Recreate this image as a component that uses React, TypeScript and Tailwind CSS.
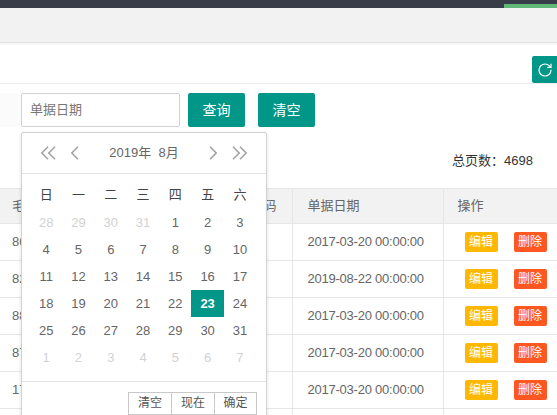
import { RotateCw } from "lucide-react";

const weekdays = ["日", "一", "二", "三", "四", "五", "六"];

const days = [
  [28, 29, 30, 31, 1, 2, 3],
  [4, 5, 6, 7, 8, 9, 10],
  [11, 12, 13, 14, 15, 16, 17],
  [18, 19, 20, 21, 22, 23, 24],
  [25, 26, 27, 28, 29, 30, 31],
  [1, 2, 3, 4, 5, 6, 7],
];

const rows = [
  { id: "86", date: "2017-03-20 00:00:00" },
  { id: "82", date: "2019-08-22 00:00:00" },
  { id: "88", date: "2017-03-20 00:00:00" },
  { id: "87", date: "2017-03-20 00:00:00" },
  { id: "17", date: "2017-03-20 00:00:00" },
];

function DoubleArrow({ flip }: { flip?: boolean }) {
  return (
    <svg width="16" height="14" viewBox="0 0 16 14" fill="none" stroke="#a3a3a3" strokeWidth="1.6" className={flip ? "rotate-180" : ""}>
      <path d="M8 .8 1.8 7 8 13.2M15 .8 8.8 7 15 13.2" />
    </svg>
  );
}

function SingleArrow({ flip }: { flip?: boolean }) {
  return (
    <svg width="9" height="14" viewBox="0 0 9 14" fill="none" stroke="#a3a3a3" strokeWidth="1.6" className={flip ? "rotate-180" : ""}>
      <path d="M8 .8 1.8 7 8 13.2" />
    </svg>
  );
}

function DatePicker() {
  return (
    <div className="absolute left-[21px] top-[132px] w-[246px] rounded-xs border border-[#d2d2d2] bg-white shadow-[0_2px_4px_rgba(0,0,0,0.12)]">
      <div className="flex h-[41px] items-center border-b border-[#e2e2e2] px-[18px]">
        <DoubleArrow />
        <div className="ml-[14px]">
          <SingleArrow />
        </div>
        <div className="flex-1 text-center text-[13px] text-[#666]">2019年&nbsp;&nbsp;8月</div>
        <div className="mr-[14px]">
          <SingleArrow flip />
        </div>
        <DoubleArrow flip />
      </div>
      <div className="px-2 pt-[8px] text-[13px]">
        <div className="grid h-[27px] grid-cols-[repeat(7,32.3px)] items-center text-center text-[#444]">
          {weekdays.map((d) => (
            <div key={d}>{d}</div>
          ))}
        </div>
        {days.map((week, i) => (
          <div key={i} className="grid grid-cols-[repeat(7,32.3px)] text-center">
            {week.map((d, j) => {
              const off = (i === 0 && d > 20) || i === 5;
              const on = d === 23;
              return (
                <div
                  key={j}
                  className={
                    on
                      ? "h-[27px] bg-[#009688] font-bold leading-[27px] text-white"
                      : off
                        ? "h-[27px] leading-[27px] text-[#d2d2d2]"
                        : "h-[27px] leading-[27px] text-[#666]"
                  }
                >
                  {d}
                </div>
              );
            })}
          </div>
        ))}
      </div>
      <div className="mt-[10px] flex justify-end border-t border-[#e2e2e2] pt-[10px] pr-[9px] pb-[10px]">
        <div className="flex h-[23px] text-xs leading-[21px] text-[#555]">
          <div className="w-[44px] border border-[#c9c9c9] text-center">清空</div>
          <div className="ml-[-1px] w-[44px] border border-[#c9c9c9] text-center">现在</div>
          <div className="ml-[-1px] w-[43px] border border-[#c9c9c9] text-center">确定</div>
        </div>
      </div>
    </div>
  );
}

export default function App() {
  return (
    <div className="relative h-[415px] w-[557px] overflow-hidden bg-white font-['Liberation_Sans','Noto_Sans_CJK_SC',sans-serif] text-sm">
      <div className="flex h-2 justify-end bg-[#393d49]">
        <div className="mt-1 h-1 w-[53px] bg-[#5fb878]"></div>
      </div>
      <div className="h-[34px] bg-[#f2f2f2]"></div>
      <div className="h-[3px] border-t border-[#e2e2e2] bg-[#f6f6f6]"></div>
      <div className="flex h-[39px] justify-end border-b border-[#eeeeee] bg-white pt-[11px]">
        <div className="flex h-[27px] w-[25px] items-center justify-center rounded-l-xs bg-[#009688] text-white">
          <RotateCw size={16} strokeWidth={1.8} />
        </div>
      </div>
      <div className="mt-[9px] flex h-[34px]">
        <div className="h-full w-[21px] bg-[#fbfbfb]"></div>
        <div className="flex h-full w-[159px] items-center rounded-xs border border-[#d2d2d2] pl-2 text-[13px] text-[#777]">
          单据日期
        </div>
        <div className="ml-2 flex h-full w-[57px] items-center justify-center rounded-xs bg-[#009688] text-white">查询</div>
        <div className="ml-[13px] flex h-full w-[57px] items-center justify-center rounded-xs bg-[#009688] text-white">清空</div>
      </div>
      <div className="mt-[24px] flex h-[20px] items-center justify-end pr-6 text-[13px] text-[#333]">总页数：4698</div>
      <table className="mt-[17px] w-[557px] table-fixed border-collapse text-[13px] text-[#666]">
        <thead>
          <tr className="h-[35px] border-y border-[#e6e6e6] bg-[#f2f2f2] text-left">
            <th className="w-[292px] pl-3 font-normal">
              <div className="flex justify-between pr-[15px]">
                <span>毛重</span>
                <span>单据编码</span>
              </div>
            </th>
            <th className="w-[151px] border-l border-[#e6e6e6] pl-[15px] font-normal">单据日期</th>
            <th className="border-l border-[#e6e6e6] pl-[14px] font-normal">操作</th>
          </tr>
        </thead>
        <tbody>
          {rows.map((r, i) => (
            <tr key={i} className="h-[37px] border-b border-[#e6e6e6]">
              <td className="pl-3">{r.id}</td>
              <td className="border-l border-[#e6e6e6] pl-[15px] tracking-[-0.23px] whitespace-nowrap">{r.date}</td>
              <td className="border-l border-[#e6e6e6] pl-[21px]">
                <div className="flex gap-[16px] text-xs text-white">
                  <div className="flex h-5 w-[33px] items-center justify-center rounded-xs bg-[#ffb800]">编辑</div>
                  <div className="flex h-5 w-[33px] items-center justify-center rounded-xs bg-[#ff5722]">删除</div>
                </div>
              </td>
            </tr>
          ))}
          <tr className="h-[37px]">
            <td></td>
            <td className="border-l border-[#e6e6e6]"></td>
            <td className="border-l border-[#e6e6e6]"></td>
          </tr>
        </tbody>
      </table>
      <DatePicker />
    </div>
  );
}
